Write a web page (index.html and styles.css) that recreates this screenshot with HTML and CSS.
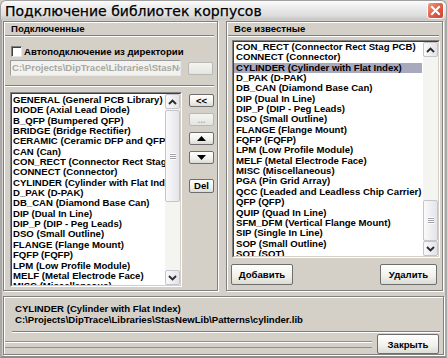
FILE: index.html
```html
<!DOCTYPE html>
<html lang="ru">
<head>
<meta charset="utf-8">
<title>Подключение библиотек корпусов</title>
<link rel="stylesheet" href="styles.css">
</head>
<body>
<div class="win">
  <div class="titlebar">
    <span class="title">Подключение библиотек корпусов</span>
    <span class="close">
      <svg width="17" height="17" viewBox="0 0 17 17">
        <defs>
          <linearGradient id="cg" x1="0" y1="0" x2="1" y2="1">
            <stop offset="0" stop-color="#f0a088"/>
            <stop offset="0.5" stop-color="#e0604a"/>
            <stop offset="1" stop-color="#c8402c"/>
          </linearGradient>
        </defs>
        <rect x="0.5" y="0.5" width="16" height="16" rx="2.5" fill="url(#cg)" stroke="#fff"/>
        <path d="M5 5 L12 12 M12 5 L5 12" stroke="#fff" stroke-width="2" stroke-linecap="square"/>
      </svg>
    </span>
  </div>
  <div class="client">
    <div class="panels">
      <section class="group group-left">
        <div class="group-head">Подключенные</div>
        <div class="check-row"><span class="checkbox"></span><span class="check-label">Автоподключение из директории</span></div>
        <div class="path-row">
          <div class="path-input">C:\Projects\DipTrace\Libraries\StasNewLib\Patterns</div>
          <span class="btn btn-disabled btn-dots"></span>
        </div>
        <div class="sep"></div>
        <div class="list-row">
          <div class="list list-left">
            <div class="list-in">
              <div class="items items-left">
                <div class="item">GENERAL (General PCB Library)</div>
                <div class="item">DIODE (Axial Lead Diode)</div>
                <div class="item">B_QFP (Bumpered QFP)</div>
                <div class="item">BRIDGE (Bridge Rectifier)</div>
                <div class="item">CERAMIC (Ceramic DFP and QFP)</div>
                <div class="item">CAN (Can)</div>
                <div class="item">CON_RECT (Connector Rect Stag PCB)</div>
                <div class="item">CONNECT (Connector)</div>
                <div class="item">CYLINDER (Cylinder with Flat Index)</div>
                <div class="item">D_PAK (D-PAK)</div>
                <div class="item">DB_CAN (Diamond Base Can)</div>
                <div class="item">DIP (Dual In Line)</div>
                <div class="item">DIP_P (DIP - Peg Leads)</div>
                <div class="item">DSO (Small Outline)</div>
                <div class="item">FLANGE (Flange Mount)</div>
                <div class="item">FQFP (FQFP)</div>
                <div class="item">LPM (Low Profile Module)</div>
                <div class="item">MELF (Metal Electrode Face)</div>
                <div class="item">MISC (Miscellaneous)</div>
              </div>
              <div class="vscroll">
                <span class="sb-btn"><svg width="9" height="6" viewBox="0 0 9 6"><path d="M1 5 L4.5 1.5 L8 5" fill="none" stroke="#2a2a2a" stroke-width="1.8"/></svg></span>
                <div class="sb-track">
                  <span class="sb-thumb thumb-left"><span class="grip"></span></span>
                </div>
                <span class="sb-btn"><svg width="9" height="6" viewBox="0 0 9 6"><path d="M1 1 L4.5 4.5 L8 1" fill="none" stroke="#2a2a2a" stroke-width="1.8"/></svg></span>
              </div>
            </div>
          </div>
          <div class="side-buttons">
            <span class="btn side-btn">&lt;&lt;</span>
            <span class="btn side-btn btn-disabled">...</span>
            <span class="btn side-btn"><svg width="9" height="5" viewBox="0 0 9 5"><path d="M0 5 L4.5 0 L9 5 Z" fill="#000"/></svg></span>
            <span class="btn side-btn"><svg width="9" height="5" viewBox="0 0 9 5"><path d="M0 0 L4.5 5 L9 0 Z" fill="#000"/></svg></span>
            <span class="btn side-btn btn-del">Del</span>
          </div>
        </div>
      </section>
      <section class="group group-right">
        <div class="group-head">Все известные</div>
        <div class="list list-right">
          <div class="list-in">
            <div class="items items-right">
              <div class="item">CON_RECT (Connector Rect Stag PCB)</div>
              <div class="item">CONNECT (Connector)</div>
              <div class="item selected">CYLINDER (Cylinder with Flat Index)</div>
              <div class="item">D_PAK (D-PAK)</div>
              <div class="item">DB_CAN (Diamond Base Can)</div>
              <div class="item">DIP (Dual In Line)</div>
              <div class="item">DIP_P (DIP - Peg Leads)</div>
              <div class="item">DSO (Small Outline)</div>
              <div class="item">FLANGE (Flange Mount)</div>
              <div class="item">FQFP (FQFP)</div>
              <div class="item">LPM (Low Profile Module)</div>
              <div class="item">MELF (Metal Electrode Face)</div>
              <div class="item">MISC (Miscellaneous)</div>
              <div class="item">PGA (Pin Grid Array)</div>
              <div class="item">QCC (Leaded and Leadless Chip Carrier)</div>
              <div class="item">QFP (QFP)</div>
              <div class="item">QUIP (Quad In Line)</div>
              <div class="item">SFM_DFM (Vertical Flange Mount)</div>
              <div class="item">SIP (Single In Line)</div>
              <div class="item">SOP (Small Outline)</div>
              <div class="item">SOT (SOT)</div>
            </div>
            <div class="vscroll">
              <span class="sb-btn"><svg width="9" height="6" viewBox="0 0 9 6"><path d="M1 5 L4.5 1.5 L8 5" fill="none" stroke="#2a2a2a" stroke-width="1.8"/></svg></span>
              <div class="sb-track">
                <span class="sb-thumb thumb-right"><span class="grip"></span></span>
              </div>
              <span class="sb-btn"><svg width="9" height="6" viewBox="0 0 9 6"><path d="M1 1 L4.5 4.5 L8 1" fill="none" stroke="#2a2a2a" stroke-width="1.8"/></svg></span>
            </div>
          </div>
        </div>
        <div class="action-row">
          <span class="btn btn-add">Добавить</span>
          <span class="btn btn-remove">Удалить</span>
        </div>
      </section>
    </div>
    <div class="status">
      <div class="info">
        <div class="info-line">CYLINDER (Cylinder with Flat Index)</div>
        <div class="info-line">C:\Projects\DipTrace\Libraries\StasNewLib\Patterns\cylinder.lib</div>
      </div>
      <div class="status-bottom">
        <div class="progress"></div>
        <span class="btn btn-close">Закрыть</span>
      </div>
    </div>
  </div>
</div>
</body>
</html>
```
FILE: styles.css
```css
* { box-sizing: border-box; }
html, body { margin: 0; padding: 0; }
body {
  width: 447px;
  height: 358px;
  overflow: hidden;
  background: #d4d0c8;
  font-family: "Liberation Sans", Arial, sans-serif;
  font-weight: bold;
  font-size: 9.6px;
  color: #000;
}
.win {
  width: 447px;
  height: 358px;
  display: flex;
  flex-direction: column;
}
.titlebar {
  height: 20px;
  flex: none;
  display: flex;
  align-items: center;
  justify-content: space-between;
  padding: 0 2px 0 4px;
  background: linear-gradient(#fbfbfb 0%, #ececec 35%, #dedede 75%, #c4c4c4 100%);
  border-radius: 6px 6px 0 0;
  border: 1px solid #a0a0a0;
  border-bottom: none;
}
.title {
  font-family: "DejaVu Sans", Verdana, sans-serif;
  font-weight: normal;
  font-size: 14px;
  color: #000;
  -webkit-text-stroke: 0.25px #000;
  margin-top: 1px;
}
.close { display: flex; }
.client {
  flex: 1;
  display: flex;
  flex-direction: column;
  border-left: 2px solid #a8a8a8;
  border-right: 2px solid #a8a8a8;
  border-bottom: 2px solid #8c8c8c;
  padding: 0 1px;
}
.panels {
  display: flex;
  gap: 8px;
  margin-top: 1px;
}
.group {
  height: 270px;
  border: 1px solid #808080;
  box-shadow: inset 1px 1px 0 #fff, 1px 1px 0 #fff;
  display: flex;
  flex-direction: column;
}
.group-left { width: 215px; }
.group-right { width: 217px; }
.group-head {
  height: 14px;
  line-height: 13px;
  padding-left: 6px;
  margin: 0 3px 0 1px;
  border-bottom: 1px solid #808080;
  box-shadow: 0 1px 0 #fff;
}
.check-row {
  margin-top: 9px;
  height: 12px;
  display: flex;
  align-items: center;
  padding-left: 7px;
}
.checkbox {
  width: 11px;
  height: 11px;
  background: #fff;
  border: 1px solid;
  border-color: #808080 #e8e8e8 #e8e8e8 #808080;
  box-shadow: inset 1px 1px 0 #404040;
  margin-right: 2px;
}
.path-row {
  margin-top: 3px;
  height: 16px;
  display: flex;
  align-items: center;
  padding-left: 6px;
}
.path-input {
  width: 171px;
  height: 16px;
  background: #f2f2f0;
  border: 1px solid;
  border-color: #9c9c9c #e8e8e8 #e8e8e8 #9c9c9c;
  color: #a8a8a0;
  line-height: 14px;
  padding-left: 1px;
  white-space: nowrap;
  overflow: hidden;
}
.btn {
  display: flex;
  align-items: center;
  justify-content: center;
  border: 1px solid #6e6e6e;
  border-radius: 2px;
  background: linear-gradient(#ffffff, #f0f0ec 60%, #dcdcd6);
  color: #000;
  white-space: nowrap;
}
.btn-disabled {
  border-color: #b8b8b4;
  color: #b0b0a8;
  background: linear-gradient(#f4f4f2, #e4e4e0);
}
.btn-dots {
  width: 25px;
  height: 13px;
  margin-left: 7px;
  margin-top: 1px;
}
.sep {
  margin: 9px 3px 0 1px;
  height: 2px;
  border-top: 1px solid #808080;
  border-bottom: 1px solid #fff;
}
.list-row {
  margin-top: 5px;
  height: 195px;
  display: flex;
  padding-left: 6px;
}
.list {
  border: 1px solid;
  border-color: #808080 #fff #fff #808080;
}
.list-in {
  height: 100%;
  display: flex;
  background: #fff;
  border: 1px solid;
  border-color: #404040 #d4d0c8 #d4d0c8 #404040;
}
.list-left { width: 172px; height: 195px; }
.list-right { width: 208px; height: 218px; margin: 4px 0 0 5px; }
.items {
  flex: 1;
  min-width: 0;
  overflow: hidden;
  white-space: nowrap;
}
.items-left { padding: 1px 0 0 1px; }
.items-right { padding: 0 1px 0 0; }
.items-right .item { padding-left: 2px; }
.item { height: 10.35px; line-height: 10.35px; }
.selected { background: #a9a9bd; }
.vscroll {
  width: 15px;
  flex: none;
  display: flex;
  flex-direction: column;
  background: #f4f4f0;
}
.sb-btn {
  height: 15px;
  flex: none;
  display: flex;
  align-items: center;
  justify-content: center;
  border: 1px solid #c4c4cc;
  border-radius: 2px;
  background: linear-gradient(to right, #fafafa, #e2e2e8);
}
.sb-track {
  flex: 1;
  display: flex;
  flex-direction: column;
}
.sb-thumb {
  display: flex;
  align-items: center;
  justify-content: center;
  border: 1px solid #c4c4cc;
  border-radius: 2px;
  background: linear-gradient(to right, #fafafa, #e4e4ea);
}
.thumb-left { margin-top: 1px; height: 92px; }
.thumb-right { margin-top: 143px; height: 41px; }
.grip {
  width: 6px;
  height: 7px;
  background: repeating-linear-gradient(#fff 0, #fff 1px, #a0a0a8 1px, #a0a0a8 2px);
}
.side-buttons {
  margin-left: 7px;
  display: flex;
  flex-direction: column;
  padding-top: 2px;
}
.side-btn {
  width: 25px;
  height: 13px;
  margin-bottom: 6px;
  line-height: 1;
}
.btn-del { margin-top: 9px; height: 14px; }
.action-row {
  margin: 6px 5px 0 4px;
  height: 21px;
  display: flex;
  justify-content: space-between;
}
.btn-add { width: 62px; }
.btn-remove { width: 57px; }
.status {
  flex: 1;
  margin: 5px 0 1px 0;
  border: 1px solid #808080;
  box-shadow: inset 1px 1px 0 #fff, 1px 1px 0 #fff;
  display: flex;
  flex-direction: column;
}
.info {
  height: 35px;
  margin: 0 3px 0 8px;
  padding: 6px 0 0 3px;
  border-bottom: 1px solid #808080;
  box-shadow: 0 1px 0 #fff;
}
.info-line { height: 11px; line-height: 11px; white-space: nowrap; }
.status-bottom {
  flex: 1;
  display: flex;
  align-items: flex-start;
}
.progress {
  flex: 1;
  height: 7px;
  margin: 9px 5px 0 1px;
  border-top: 1px solid #909090;
  border-bottom: 1px solid #909090;
  box-shadow: inset 0 1px 0 #fff;
}
.btn-close {
  width: 62px;
  height: 20px;
  margin: 2px 4px 0 0;
}
```
